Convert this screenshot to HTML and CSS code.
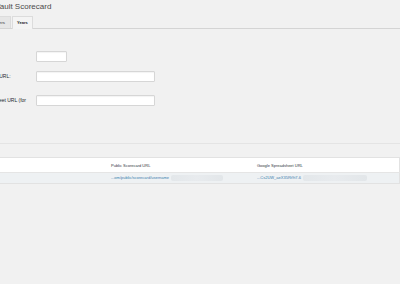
FILE: index.html
```html
<!DOCTYPE html>
<html lang="en">
<head>
  <meta charset="UTF-8">
  <meta name="viewport" content="width=device-width, initial-scale=1.0">
  <title>Vault Scorecard</title>
  <link rel="stylesheet" href="styles.css">
</head>
<body>
  <div class="wrap">
    <h1>Vault Scorecard</h1>
    <div class="tabs">
      <span class="tab">Members</span>
      <span class="tab active">Years</span>
    </div>

    <form class="settings">
      <div class="row row-year">
        <label for="year">Year:</label>
        <input type="text" id="year" class="small">
      </div>
      <div class="row row-public">
        <label for="publicUrl">Public Scorecard URL:</label>
        <input type="text" id="publicUrl">
      </div>
      <div class="row row-sheet">
        <label for="sheetUrl">Google Spreadsheet URL (for embedding):</label>
        <input type="text" id="sheetUrl">
      </div>
    </form>

    <div class="divider"></div>

    <table class="years">
      <thead>
        <tr>
          <th class="col-year">Year</th>
          <th class="col-public">Public Scorecard URL</th>
          <th>Google Spreadsheet URL</th>
        </tr>
      </thead>
      <tbody>
        <tr>
          <td class="col-year"></td>
          <td class="col-public"><a href="#">...om/public/scorecard/username</a><span class="blur"></span></td>
          <td><a href="#">...Cs2UW_aeX35Rt9t7-6</a><span class="blur wide"></span></td>
        </tr>
      </tbody>
    </table>
  </div>
</body>
</html>
```

FILE: styles.css
```css
body {
  margin: 0;
  background: #f1f1f1;
  font-family: 'Liberation Sans', Arial, sans-serif;
  color: #32373c;
  overflow: hidden;
}
.wrap {
  margin-left: -40px;
}
h1 {
  margin: 0;
  padding: 1px 0 0 35px;
  font-size: 8px;
  line-height: 12px;
  font-weight: normal;
  color: #4a4a4a;
  height: 15px;
}
.tabs {
  display: flex;
  align-items: flex-end;
  gap: 1px;
  padding-left: 18px;
  border-bottom: 1px solid #d4d4d4;
  height: 12px;
}
.tab {
  font-size: 4px;
  font-weight: bold;
  line-height: 11px;
  padding: 0 5px;
  border: 1px solid #dcdcdc;
  border-bottom: none;
  background: #e6e6e6;
  color: #666;
  width: 21px;
  text-align: right;
}
.tab.active {
  background: #f4f4f4;
  color: #222;
  width: auto;
  padding: 0 4px;
  margin-bottom: -1px;
  line-height: 12px;
}
.settings {
  margin-top: 22px;
}
.row {
  display: grid;
  grid-template-columns: 76px 1fr;
  align-items: center;
}
.row label {
  font-size: 5px;
  color: #23282d;
  line-height: 7px;
  padding-right: 10px;
}
.row input {
  box-sizing: border-box;
  width: 119px;
  height: 11px;
  margin: 0;
  padding: 0;
  border: 1px solid #d6d6d6;
  border-radius: 1px;
  background: #fff;
  box-shadow: inset 0 1px 1px rgba(0, 0, 0, 0.05);
}
.row input.small {
  width: 31px;
}
.row-public {
  margin-top: 9px;
}
.row-sheet {
  margin-top: 13px;
  align-items: start;
}
.row-sheet label {
  padding-top: 2px;
}
.divider {
  margin-top: 32px;
  border-top: 1px solid #e4e4e4;
  height: 13px;
}
.years {
  width: 100%;
  border-collapse: collapse;
  border: 1px solid #e2e2e2;
  font-size: 4px;
}
.years th {
  background: #fff;
  font-weight: normal;
  text-align: left;
  height: 14px;
  padding: 0 0 0 5px;
  color: #32373c;
  border-bottom: 1px solid #e5e5e5;
}
.years td {
  background: #eef1f3;
  height: 10px;
  padding: 0 0 0 5px;
  white-space: nowrap;
}
.years .col-year {
  width: 140px;
}
.years .col-public {
  width: 141px;
}
.years a {
  color: #3b7cae;
  text-decoration: none;
}
.blur {
  display: inline-block;
  vertical-align: middle;
  width: 52px;
  height: 6px;
  margin-left: 2px;
  background: linear-gradient(to right, #e3e7ea, #e8ebee, #e2e6e9);
  border-radius: 2px;
}
.blur.wide {
  width: 64px;
}
```
